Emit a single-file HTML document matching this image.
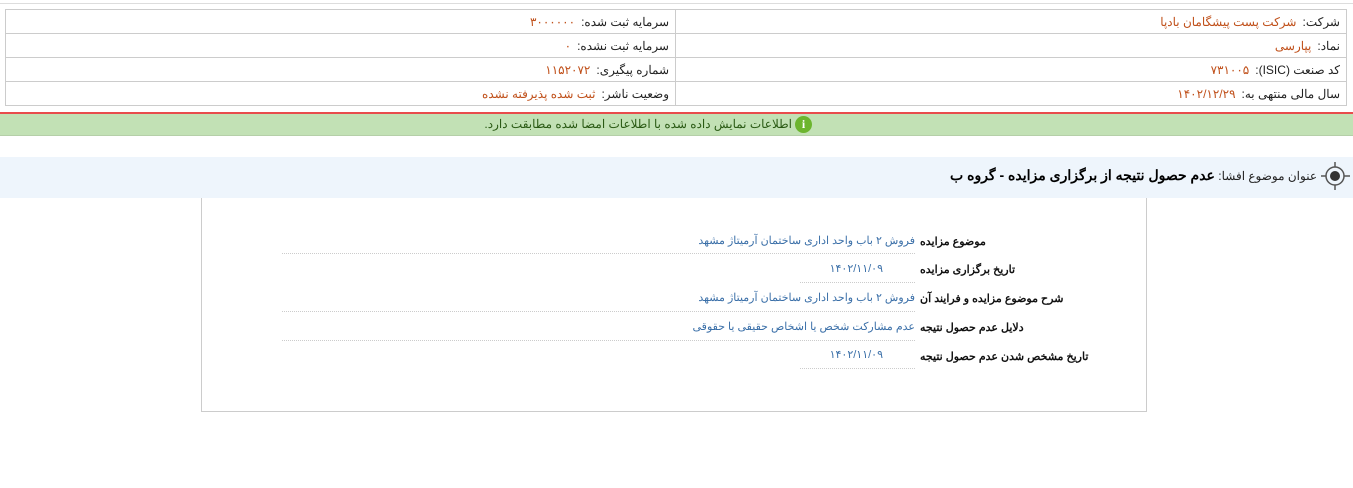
<!DOCTYPE html>
<html><head><meta charset="utf-8"><style>
body{margin:0;width:1353px;height:488px;background:#fff;font-family:"Liberation Sans","Noto Sans CJK SC",sans-serif;font-size:12px;position:relative;overflow:hidden}
.a{position:absolute;white-space:nowrap;direction:rtl}
table{position:absolute;left:5px;top:9px;width:1342px;border-collapse:collapse;direction:rtl}
td{border:1px solid #ccc;height:23px;padding:0 6px;font-size:12px;color:#222}
td span{color:#c0501a;margin-right:6px}
.lab{font-weight:bold;color:#111;font-size:11px;left:920px}
.val{color:#3a6fa8;font-size:11px;letter-spacing:-0.2px}
.dl{position:absolute;border-top:1px dotted #ccc;height:0}
</style></head><body>
<div style="position:absolute;left:0;top:3px;width:1353px;border-top:1px solid #ddd"></div>
<table>
<tr><td style="width:658px">شرکت:<span>شرکت پست پیشگامان بادپا</span></td><td>سرمایه ثبت شده:<span>۳۰۰۰۰۰۰</span></td></tr>
<tr><td>نماد:<span>پپارسی</span></td><td>سرمایه ثبت نشده:<span>۰</span></td></tr>
<tr><td>کد صنعت (ISIC):<span>۷۳۱۰۰۵</span></td><td>شماره پیگیری:<span>۱۱۵۲۰۷۲</span></td></tr>
<tr><td>سال مالی منتهی به:<span>۱۴۰۲/۱۲/۲۹</span></td><td>وضعیت ناشر:<span>ثبت شده پذیرفته نشده</span></td></tr>
</table>
<div style="position:absolute;left:0;top:112px;width:1353px;height:2px;background:#e84c4c"></div>
<div style="position:absolute;left:0;top:114px;width:1353px;height:21px;background:#c2e1b5;border-bottom:1px solid #b5cfa8"></div>
<div class="a" style="right:561px;top:117px;color:#2a5a14;font-size:12px">اطلاعات نمایش داده شده با اطلاعات امضا شده مطابقت دارد.</div>
<div style="position:absolute;left:795px;top:116px;width:17px;height:17px;border-radius:50%;background:#6cb52e;color:#fff;font-weight:bold;font-size:12px;text-align:center;line-height:17px;font-family:'Liberation Serif',serif">i</div>
<div style="position:absolute;left:0;top:157px;width:1353px;height:41px;background:#eef5fc"></div>
<svg style="position:absolute;left:1320px;top:160px" width="34" height="32" viewBox="0 0 34 32"><circle cx="15" cy="16" r="9" fill="none" stroke="#555" stroke-width="1.5"/><circle cx="15" cy="16" r="5" fill="#333"/><line x1="15" y1="2" x2="15" y2="7" stroke="#555" stroke-width="1.5"/><line x1="15" y1="25" x2="15" y2="30" stroke="#555" stroke-width="1.5"/><line x1="1" y1="16" x2="6" y2="16" stroke="#555" stroke-width="1.5"/><line x1="24" y1="16" x2="30" y2="16" stroke="#555" stroke-width="1.5"/></svg>
<div class="a" style="right:36px;top:167px;font-size:12px;color:#222">عنوان موضوع افشا: <b style="font-size:14px;color:#000">عدم حصول نتیجه از برگزاری مزایده - گروه ب</b></div>
<div style="position:absolute;left:201px;top:198px;width:944px;height:213px;border:1px solid #ccc;border-top:none"></div>
<div class="a lab" style="top:235px">موضوع مزایده</div>
<div class="a val" style="right:438px;top:234px">فروش ۲ باب واحد اداری ساختمان آرمیتاژ مشهد</div>
<div class="dl" style="left:282px;width:633px;top:253px"></div>
<div class="a lab" style="top:263px">تاریخ برگزاری مزایده</div>
<div class="a val" style="right:470px;top:262px">۱۴۰۲/۱۱/۰۹</div>
<div class="dl" style="left:800px;width:115px;top:282px"></div>
<div class="a lab" style="top:292px">شرح موضوع مزایده و فرایند آن</div>
<div class="a val" style="right:438px;top:291px">فروش ۲ باب واحد اداری ساختمان آرمیتاژ مشهد</div>
<div class="dl" style="left:282px;width:633px;top:311px"></div>
<div class="a lab" style="top:321px">دلایل عدم حصول نتیجه</div>
<div class="a val" style="right:438px;top:320px">عدم مشارکت شخص یا اشخاص حقیقی یا حقوقی</div>
<div class="dl" style="left:282px;width:633px;top:340px"></div>
<div class="a lab" style="top:350px">تاریخ مشخص شدن عدم حصول نتیجه</div>
<div class="a val" style="right:470px;top:348px">۱۴۰۲/۱۱/۰۹</div>
<div class="dl" style="left:800px;width:115px;top:368px"></div>
</body></html>
